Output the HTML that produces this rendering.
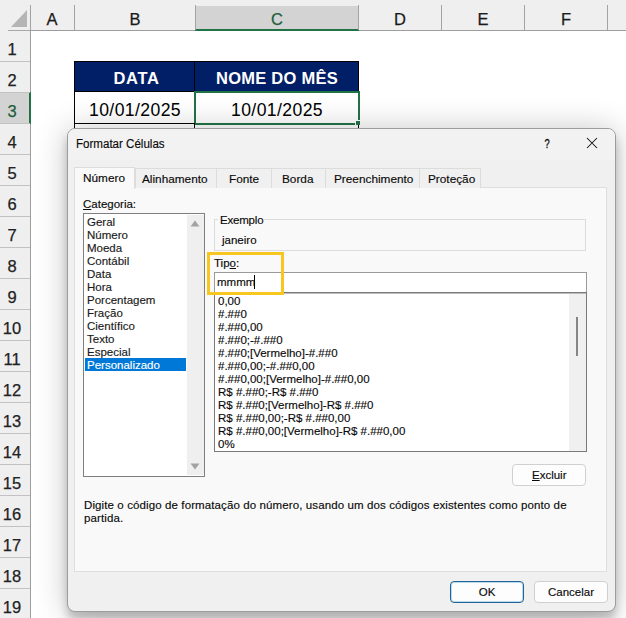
<!DOCTYPE html>
<html><head><meta charset="utf-8">
<style>
*{margin:0;padding:0;box-sizing:border-box}
html,body{width:626px;height:618px;overflow:hidden;background:#fff;font-family:"Liberation Sans",sans-serif;color:#000}
.a{position:absolute}
.t{position:absolute;white-space:nowrap;line-height:0}
/* sheet */
#colhdr{left:0;top:0;width:626px;height:30px;background:#efefef}
#rowhdr{left:0;top:30px;width:30px;height:588px;background:#efefef}
.vsep{width:1px;background:#a3a3a3;top:5px;height:25px}
.hsep{height:1px;background:#c2c2c2;left:0;width:30px}
.ch{font-size:16.5px;color:#1a1a1a;-webkit-text-stroke-width:0.25px}
.rh{font-size:16.5px;color:#1a1a1a;-webkit-text-stroke-width:0.25px}
/* dialog */
#dlg{left:67px;top:128px;width:549px;height:484px;background:#f0f0f0;border:1px solid #9c9c9c;border-radius:8px;box-shadow:0 2px 32px rgba(0,0,0,0.24),0 8px 8px rgba(0,0,0,0.2)}
.ui{font-size:11.5px;color:#0a0a0a;-webkit-text-stroke-width:0.15px}
</style></head><body>
<!-- column headers -->
<div id="colhdr" class="a"></div>
<div class="a" style="left:0;top:30px;width:626px;height:1px;background:#9e9e9e"></div>
<div class="a" style="left:195px;top:6px;width:164px;height:23px;background:#d3d3d3"></div>
<div class="a" style="left:195px;top:29px;width:164px;height:2px;background:#217346"></div>
<div class="a vsep" style="left:30px"></div>
<div class="a vsep" style="left:74px"></div>
<div class="a vsep" style="left:195px"></div>
<div class="a vsep" style="left:358px"></div>
<div class="a vsep" style="left:441px"></div>
<div class="a vsep" style="left:524px"></div>
<div class="a vsep" style="left:607px"></div>
<svg class="a" style="left:0;top:0" width="30" height="30"><polygon points="27,10 27,27 11,27" fill="#b5b5b5"/></svg>
<div class="t ch" style="left:52px;top:19px;transform:translateX(-50%)">A</div>
<div class="t ch" style="left:135px;top:19px;transform:translateX(-50%)">B</div>
<div class="t ch" style="left:277px;top:19px;transform:translateX(-50%);color:#1e5e3c">C</div>
<div class="t ch" style="left:400px;top:19px;transform:translateX(-50%)">D</div>
<div class="t ch" style="left:483px;top:19px;transform:translateX(-50%)">E</div>
<div class="t ch" style="left:566px;top:19px;transform:translateX(-50%)">F</div>
<!-- row headers -->
<div id="rowhdr" class="a"></div>
<div class="a" style="left:8px;top:30px;width:22px;height:1px;background:#a8a8a8"></div>
<div class="a" style="left:30px;top:30px;width:1px;height:588px;background:#9e9e9e"></div>
<div class="a" style="left:0;top:92px;width:29px;height:31px;background:#d3d3d3"></div>
<div class="a" style="left:29px;top:92px;width:2px;height:32px;background:#217346"></div>
<div class="a hsep" style="top:61px"></div>
<div class="t rh" style="left:12px;top:49px;transform:translateX(-50%);color:#222">1</div>
<div class="a hsep" style="top:92px"></div>
<div class="t rh" style="left:12px;top:80px;transform:translateX(-50%);color:#222">2</div>
<div class="a hsep" style="top:123px"></div>
<div class="t rh" style="left:12px;top:111px;transform:translateX(-50%);color:#1e5e3c">3</div>
<div class="a hsep" style="top:154px"></div>
<div class="t rh" style="left:12px;top:142px;transform:translateX(-50%);color:#222">4</div>
<div class="a hsep" style="top:185px"></div>
<div class="t rh" style="left:12px;top:173px;transform:translateX(-50%);color:#222">5</div>
<div class="a hsep" style="top:216px"></div>
<div class="t rh" style="left:12px;top:204px;transform:translateX(-50%);color:#222">6</div>
<div class="a hsep" style="top:247px"></div>
<div class="t rh" style="left:12px;top:235px;transform:translateX(-50%);color:#222">7</div>
<div class="a hsep" style="top:278px"></div>
<div class="t rh" style="left:12px;top:266px;transform:translateX(-50%);color:#222">8</div>
<div class="a hsep" style="top:309px"></div>
<div class="t rh" style="left:12px;top:297px;transform:translateX(-50%);color:#222">9</div>
<div class="a hsep" style="top:340px"></div>
<div class="t rh" style="left:12px;top:328px;transform:translateX(-50%);color:#222">10</div>
<div class="a hsep" style="top:371px"></div>
<div class="t rh" style="left:12px;top:359px;transform:translateX(-50%);color:#222">11</div>
<div class="a hsep" style="top:402px"></div>
<div class="t rh" style="left:12px;top:390px;transform:translateX(-50%);color:#222">12</div>
<div class="a hsep" style="top:433px"></div>
<div class="t rh" style="left:12px;top:421px;transform:translateX(-50%);color:#222">13</div>
<div class="a hsep" style="top:464px"></div>
<div class="t rh" style="left:12px;top:452px;transform:translateX(-50%);color:#222">14</div>
<div class="a hsep" style="top:495px"></div>
<div class="t rh" style="left:12px;top:483px;transform:translateX(-50%);color:#222">15</div>
<div class="a hsep" style="top:526px"></div>
<div class="t rh" style="left:12px;top:514px;transform:translateX(-50%);color:#222">16</div>
<div class="a hsep" style="top:557px"></div>
<div class="t rh" style="left:12px;top:545px;transform:translateX(-50%);color:#222">17</div>
<div class="a hsep" style="top:588px"></div>
<div class="t rh" style="left:12px;top:576px;transform:translateX(-50%);color:#222">18</div>
<div class="a hsep" style="top:619px"></div>
<div class="t rh" style="left:12px;top:607px;transform:translateX(-50%);color:#222">19</div>
<!-- table -->
<div class="a" style="left:74px;top:61px;width:285px;height:31px;background:#001f66"></div>
<div class="a" style="left:74px;top:61px;width:285px;height:63px;border:1px solid #000"></div>
<div class="a" style="left:74px;top:91px;width:285px;height:1px;background:#000"></div>
<div class="a" style="left:194px;top:61px;width:1px;height:63px;background:#000"></div>
<div class="t" style="left:136.5px;top:78px;transform:translateX(-50%);font-size:16.5px;font-weight:bold;color:#fff;letter-spacing:0.7px">DATA</div>
<div class="t" style="left:277px;top:78px;transform:translateX(-50%);font-size:16.5px;font-weight:bold;color:#fff;letter-spacing:0.25px">NOME DO MÊS</div>
<div class="t" style="left:135px;top:109.5px;transform:translateX(-50%);font-size:17.6px;letter-spacing:0.4px">10/01/2025</div>
<div class="t" style="left:277px;top:109.5px;transform:translateX(-50%);font-size:17.6px;letter-spacing:0.4px">10/01/2025</div>
<div class="a" style="left:194px;top:91px;width:166px;height:34px;border:2px solid #217346"></div>
<div class="a" style="left:355px;top:120px;width:6px;height:6px;background:#217346;border:1px solid #fff"></div>

<div class="a" style="left:74px;top:123px;width:1px;height:6px;background:#000"></div>
<div class="a" style="left:194px;top:123px;width:1px;height:6px;background:#000"></div>
<div class="a" style="left:358px;top:125px;width:1px;height:4px;background:#000"></div>
<!-- dialog -->
<div id="dlg" class="a"></div>
<div class="a" style="left:68px;top:129px;width:547px;height:31px;background:#f3f2f2;border-radius:7px 7px 0 0"></div>
<div class="t ui" style="left:76px;top:143.5px;font-size:12.3px;transform:scaleX(0.94);transform-origin:0 0">Formatar Células</div>
<div class="t ui" style="left:547px;top:143.5px;font-size:13px;transform:translateX(-50%) scaleX(0.72);-webkit-text-stroke-width:0.3px">?</div>
<svg class="a" style="left:586px;top:137px" width="12" height="12"><path d="M1 1L11 11M11 1L1 11" stroke="#111" stroke-width="1.05"/></svg>
<!-- tab panel -->
<div class="a" style="left:74px;top:187px;width:533px;height:385px;background:#f9f9f9;border:1px solid #dedede"></div>
<!-- tabs -->
<div class="a" style="left:135px;top:168px;width:82px;height:20px;background:#f0f0f0;border:1px solid #dcdcdc;border-bottom:none"></div>
<div class="a" style="left:216px;top:168px;width:56px;height:20px;background:#f0f0f0;border:1px solid #dcdcdc;border-bottom:none"></div>
<div class="a" style="left:271px;top:168px;width:55px;height:20px;background:#f0f0f0;border:1px solid #dcdcdc;border-bottom:none"></div>
<div class="a" style="left:325px;top:168px;width:95px;height:20px;background:#f0f0f0;border:1px solid #dcdcdc;border-bottom:none"></div>
<div class="a" style="left:419px;top:168px;width:62px;height:20px;background:#f0f0f0;border:1px solid #dcdcdc;border-bottom:none"></div>
<div class="a" style="left:74px;top:167px;width:61px;height:22px;background:#f9f9f9;border:1px solid #dcdcdc;border-bottom:none"></div>
<div class="t ui" style="left:83px;top:178px;font-size:11.8px">Número</div>
<div class="t ui" style="left:142px;top:179px;font-size:11.8px">Alinhamento</div>
<div class="t ui" style="left:229px;top:179px;font-size:11.8px">Fonte</div>
<div class="t ui" style="left:282px;top:179px;font-size:11.8px">Borda</div>
<div class="t ui" style="left:334px;top:179px;font-size:11.8px">Preenchimento</div>
<div class="t ui" style="left:428px;top:179px;font-size:11.8px">Proteção</div>
<!-- categoria -->
<div class="t ui" style="left:83px;top:204px"><u>C</u>ategoria:</div>
<div class="a" style="left:83px;top:213px;width:122px;height:264px;background:#fff;border:1px solid #7f7f7f"></div>
<div class="a" style="left:187px;top:215px;width:17px;height:260px;background:#efefef"></div>
<svg class="a" style="left:190px;top:220px" width="10" height="8"><polygon points="5,0.5 9.5,6.5 0.5,6.5" fill="#a3a3a3"/></svg>
<svg class="a" style="left:190px;top:463px" width="10" height="8"><polygon points="0.5,0.5 9.5,0.5 5,6.5" fill="#a3a3a3"/></svg>
<div class="a" style="left:85px;top:358px;width:101px;height:13px;background:#0078d7"></div>
<div class="t ui" style="left:87px;top:222px;color:#1a1a1a">Geral</div>
<div class="t ui" style="left:87px;top:235px;color:#1a1a1a">Número</div>
<div class="t ui" style="left:87px;top:248px;color:#1a1a1a">Moeda</div>
<div class="t ui" style="left:87px;top:261px;color:#1a1a1a">Contábil</div>
<div class="t ui" style="left:87px;top:274px;color:#1a1a1a">Data</div>
<div class="t ui" style="left:87px;top:287px;color:#1a1a1a">Hora</div>
<div class="t ui" style="left:87px;top:300px;color:#1a1a1a">Porcentagem</div>
<div class="t ui" style="left:87px;top:313px;color:#1a1a1a">Fração</div>
<div class="t ui" style="left:87px;top:326px;color:#1a1a1a">Científico</div>
<div class="t ui" style="left:87px;top:339px;color:#1a1a1a">Texto</div>
<div class="t ui" style="left:87px;top:352px;color:#1a1a1a">Especial</div>
<div class="t ui" style="left:87px;top:365px;color:#fff">Personalizado</div>
<!-- exemplo -->
<div class="a" style="left:214px;top:219px;width:372px;height:32px;border:1px solid #dcdcdc"></div>
<div class="a" style="left:218px;top:214px;width:46px;height:10px;background:#f9f9f9"></div>
<div class="t ui" style="left:220px;top:220px;letter-spacing:-0.2px">Exemplo</div>
<div class="t ui" style="left:222px;top:240px">janeiro</div>
<!-- tipo -->
<div class="t ui" style="left:214px;top:263px">Tip<u>o</u>:</div>
<div class="a" style="left:214px;top:272px;width:373px;height:21px;background:#fff;border:1px solid #9a9a9a"></div>
<div class="t ui" style="left:217px;top:282px">mmmm</div>
<div class="a" style="left:254px;top:275px;width:1px;height:14px;background:#000"></div>
<!-- format list -->
<div class="a" style="left:214px;top:292px;width:373px;height:160px;background:#fff;border:1px solid #7a7a7a;box-shadow:inset 0 1px 0 #bdbdbd"></div>
<div class="a" style="left:569px;top:294px;width:17px;height:157px;background:#f0f0f0"></div>
<div class="a" style="left:576px;top:317px;width:2px;height:39px;background:#858585"></div>
<div class="t ui" style="left:218px;top:301px">0,00</div>
<div class="t ui" style="left:218px;top:314px">#.##0</div>
<div class="t ui" style="left:218px;top:327px">#.##0,00</div>
<div class="t ui" style="left:218px;top:340px">#.##0;-#.##0</div>
<div class="t ui" style="left:218px;top:353px">#.##0;[Vermelho]-#.##0</div>
<div class="t ui" style="left:218px;top:366px">#.##0,00;-#.##0,00</div>
<div class="t ui" style="left:218px;top:379px">#.##0,00;[Vermelho]-#.##0,00</div>
<div class="t ui" style="left:218px;top:392px">R$ #.##0;-R$ #.##0</div>
<div class="t ui" style="left:218px;top:405px">R$ #.##0;[Vermelho]-R$ #.##0</div>
<div class="t ui" style="left:218px;top:418px">R$ #.##0,00;-R$ #.##0,00</div>
<div class="t ui" style="left:218px;top:431px">R$ #.##0,00;[Vermelho]-R$ #.##0,00</div>
<div class="t ui" style="left:218px;top:444px">0%</div>
<!-- yellow box -->
<div class="a" style="left:207px;top:252px;width:77px;height:43px;border:3px solid #f7c61f"></div>
<!-- excluir -->
<div class="a" style="left:512px;top:464px;width:74px;height:22px;background:#fdfdfd;border:1px solid #d0d0d0;border-radius:4px"></div>
<div class="t ui" style="left:532px;top:475px"><u>E</u>xcluir</div>
<div class="t ui" style="left:84px;top:505px;letter-spacing:0.11px">Digite o código de formatação do número, usando um dos códigos existentes como ponto de</div>
<div class="t ui" style="left:84px;top:518px;letter-spacing:0.11px">partida.</div>
<!-- buttons -->
<div class="a" style="left:450px;top:581px;width:74px;height:22px;background:#fdfdfd;border:1px solid #1f6599;border-radius:4px;box-shadow:inset 0 0 0 1px rgba(60,150,200,0.35)"></div>
<div class="t ui" style="left:487px;top:592px;transform:translateX(-50%)">OK</div>
<div class="a" style="left:534px;top:581px;width:74px;height:22px;background:#fdfdfd;border:1px solid #d0d0d0;border-radius:4px"></div>
<div class="t ui" style="left:571px;top:592px;transform:translateX(-50%)">Cancelar</div>

</body></html>
